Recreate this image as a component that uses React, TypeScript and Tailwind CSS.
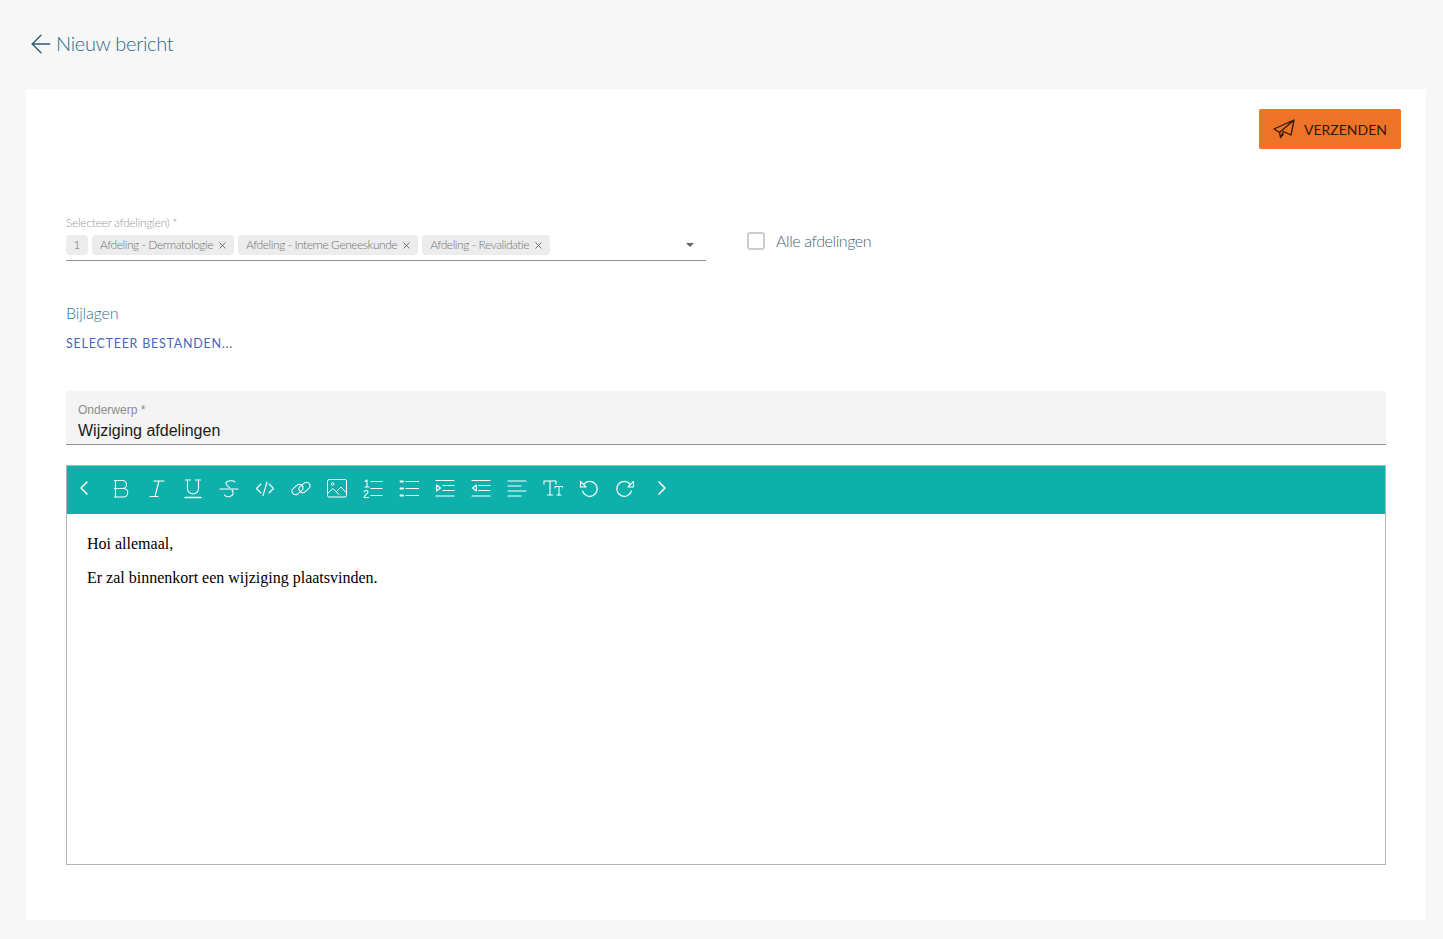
import { ArrowLeft, X } from "lucide-react";
import type { ReactNode } from "react";

const chips = [
  "Afdeling - Dermatologie",
  "Afdeling - Interne Geneeskunde",
  "Afdeling - Revalidatie",
];

const toolbarIcons: ReactNode[] = [
  <path d="M12 3 6 9l6 6" strokeWidth="1.6" />,
  <path d="M3.500 1.500h8a4 4 0 0 1 0 8h-8h9a4.200 4.200 0 0 1 0 8.500h-9M4.500 1.500V18" strokeWidth="1.100" />,
  <path d="M7 2h10M3 17.500h8M12 2 8 17.500" strokeWidth="1.100" />,
  <>
    <path d="M2.500 1h5M12.500 1h5M4.500 1v8.500a5.500 5.500 0 0 0 11 0V1" strokeWidth="1.100" />
    <path d="M2 18.500h16" strokeWidth="1.300" />
  </>,
  <>
    <path d="M16 3c-1-1.500-8-2-9 1-.6 2 2 3 3.500 4.500" strokeWidth="1.100" />
    <path d="M1 10h18" strokeWidth="1.200" />
    <path d="M13 11c2 2 1.500 5.500-2 6.500-2 .5-4.500 0-5.500-1.500" strokeWidth="1.100" />
  </>,
  <path d="M6 5 1.500 9.500 6 14M14 5l4.500 4.500L14 14M12 3 8 16.500" strokeWidth="1.100" />,
  <>
    <rect x="0.500" y="7" width="12" height="7" rx="3.500" transform="rotate(-40 6.500 10.500)" strokeWidth="1" />
    <rect x="7.500" y="5" width="12" height="7" rx="3.500" transform="rotate(-40 13.500 8.500)" strokeWidth="1" />
  </>,
  <>
    <rect x="0.500" y="0.500" width="19" height="17.500" rx="1.500" strokeWidth="1" />
    <circle cx="5.500" cy="5" r="1.300" strokeWidth="1" />
    <path d="M1 14 6 9.500l6 6M9.500 12.500 14 8l5.500 6" strokeWidth="1" />
  </>,
  <>
    <path d="M8 2.500h11M8 9.500h11M8 16.500h11" strokeWidth="1.200" />
    <path d="M2 2.500 4 1v7M2 8h4" strokeWidth="1.100" />
    <path d="M1 13c.5-2 4-2 4 0 0 1.500-3.500 3-4 5.500h4.500" strokeWidth="1.100" />
  </>,
  <>
    <path d="M7 2.500h13M7 9.500h13M7 16.500h13" strokeWidth="1.200" />
    <path d="M1.500 2.500h2.500M1.500 9.500h2.500M1.500 16.500h2.500" strokeWidth="2" />
  </>,
  <>
    <path d="M1 1.500h18M8 6.500h11M8 11.500h11M1 17h18" strokeWidth="1.200" />
    <path d="M1.500 6v6l4-3z" strokeWidth="1.200" />
  </>,
  <>
    <path d="M1 1.500h18M8 6.500h11M8 11.500h11M1 17h18" strokeWidth="1.200" />
    <path d="M5.500 6v6l-4-3z" strokeWidth="1.200" />
  </>,
  <path d="M1 2h18M1 7h13M1 12h18M1 17h13" strokeWidth="1.200" />,
  <>
    <path d="M1 5V2h12v3M7 2v14M4.500 16h5" strokeWidth="1.100" />
    <path d="M12 9V7.500h8V9M16 7.500V16M14 16h4" strokeWidth="1" />
  </>,
  <>
    <path d="M5 5a7.500 7.500 0 1 1-1.500 7" strokeWidth="1.200" />
    <path d="M1.500 2.500v5.500h5.500z" strokeWidth="1.100" />
  </>,
  <>
    <path d="M15 5a7.500 7.500 0 1 0 1.500 7" strokeWidth="1.200" />
    <path d="M18.500 2.500v5.500H13z" strokeWidth="1.100" />
  </>,
  <path d="m8 3 6 6-6 6" strokeWidth="1.600" />,
];

function Chip({ label }: { label: string }) {
  return (
    <span className="flex h-5 items-center gap-[4px] rounded-[4px] bg-[#ececec] pl-2 pr-[6px] text-[12px] tracking-[-0.45px] text-[#6f7478]">
      {label}
      <X className="h-[11px] w-[11px] text-[#555]" strokeWidth={1.800} />
    </span>
  );
}

export default function App() {
  return (
    <div className="flex min-h-[939px] flex-col bg-[#f7f7f7] font-['Lato','Noto_Sans',sans-serif] font-light">
      <header className="flex h-[89px] items-center pb-[1px] pl-[26px] text-[#2c6a8a]">
        <ArrowLeft className="h-[30px] w-[30px] text-[#2f5c73]" strokeWidth={1.100} />
        <h1 className="mb-[3px] text-[20px] font-light leading-none tracking-[-0.3px]">Nieuw bericht</h1>
      </header>

      <main className="mx-[26px] h-[831px] w-[1400px] bg-white pt-[20px]">
        <div className="flex justify-end pr-[25px]">
          <button className="flex h-[40px] w-[142px] items-center justify-center gap-[9px] rounded-[2px] bg-[#ef7326] text-[14px] font-normal text-[#2e1a0b]">
            <svg viewBox="0 0 22 22" fill="none" stroke="#2e1a0b" strokeWidth="1.300" strokeLinejoin="round" className="h-[22px] w-[22px]">
              <path d="M21 2 1 11l5.500 3.500zM21 2 6.500 14.500l1 5 3-3.500M21 2l-3 15-7.500-3.500-3 6" />
            </svg>
            VERZENDEN
          </button>
        </div>

        <div className="px-[40px]">
          <div className="mt-[66px] flex items-start">
            <div className="w-[640px] border-b border-[#8f8f8f] pb-[5px]">
              <div className="mb-[4px] h-[16px] text-[12px] leading-[16px] tracking-[-0.3px] text-[#999999]">Selecteer afdeling(en) *</div>
              <div className="flex items-center gap-[4px]">
                <span className="flex h-5 w-[22px] items-center justify-center rounded-[4px] bg-[#ececec] text-[12px] text-[#6f7478]">1</span>
                {chips.map((chip) => (
                  <Chip key={chip} label={chip} />
                ))}
                <span className="ml-auto mr-[12px] h-0 w-0 border-x-[4px] border-t-[4px] border-x-transparent border-t-[#666]" />
              </div>
            </div>
            <label className="ml-[41px] mt-[16px] flex items-center gap-[11px] text-[16px] leading-[18px] tracking-[-0.4px] text-[#3f6579]">
              <span className="h-[18px] w-[18px] rounded-[3px] border-2 border-[#cccccc] bg-white" />
              <span className="mt-[1px]">Alle afdelingen</span>
            </label>
          </div>

          <div className="mt-[42px] text-[16px] leading-[20px] tracking-[-0.15px] text-[#2f739b]">Bijlagen</div>
          <button className="mt-[13px] block text-[12.5px] font-normal leading-[16px] tracking-[0.75px] text-[#4a66b8]">SELECTEER BESTANDEN...</button>

          <div className="mt-[39px] h-[54px] rounded-t-[4px] border-b border-[#8f8f8f] bg-[#f4f4f4] px-3 pt-[12px] font-['Liberation_Sans',Arial,sans-serif] font-normal">
            <div className="text-[12px] leading-[14px] text-[#8c8c8c]">Onderwerp *</div>
            <div className="mt-[4px] text-[16px] leading-[20px] text-[#1a1a1a]">Wijziging afdelingen</div>
          </div>

          <section className="mt-[20px] h-[400px] border border-[#b5b5b5]">
            <div className="flex h-[48px] items-center bg-[#0eb0ac]">
              {toolbarIcons.map((icon, i) => (
                <span key={i} className="flex h-[48px] w-[36px] items-center justify-center pb-[2px]">
                  <svg viewBox="0 0 20 20" fill="none" stroke="#ffffff" strokeLinecap="round" strokeLinejoin="round" className="h-[20px] w-[20px]">
                    {icon}
                  </svg>
                </span>
              ))}
            </div>
            <div className="px-[20px] pt-[21px] font-['Liberation_Serif','Times_New_Roman',serif] text-[16px] font-normal leading-[18px] text-black">
              <p>Hoi allemaal,</p>
              <p className="mt-[16px]">Er zal binnenkort een wijziging plaatsvinden.</p>
            </div>
          </section>
        </div>
      </main>
    </div>
  );
}
